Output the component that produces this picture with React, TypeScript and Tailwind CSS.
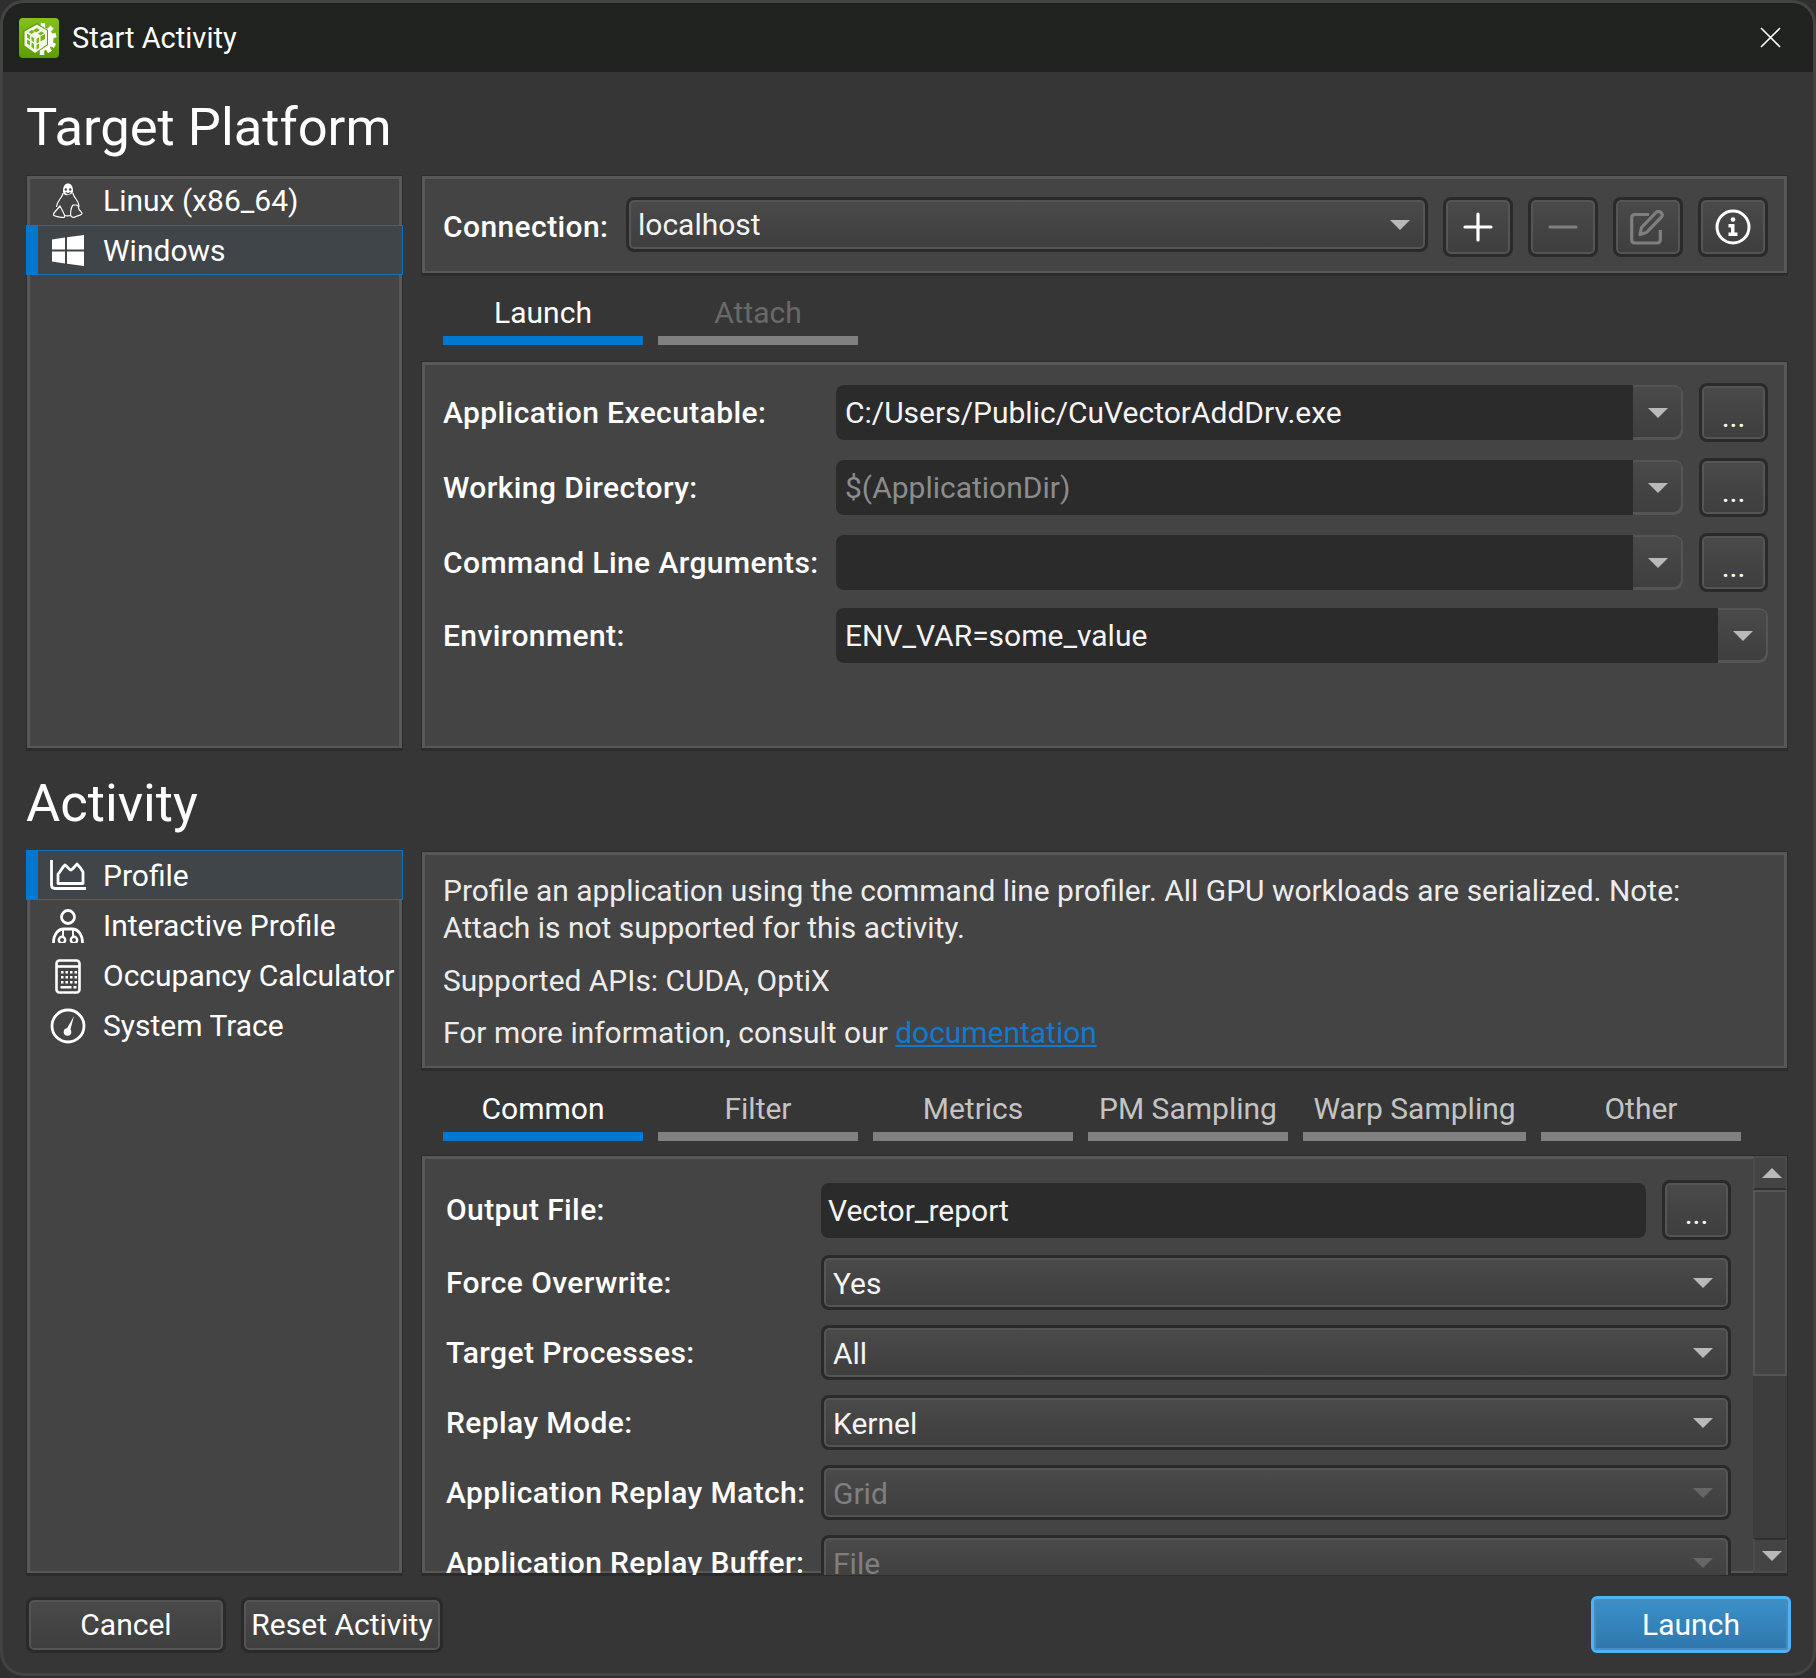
import React from "react";

const Caret = ({ dim = false, up = false }: { dim?: boolean; up?: boolean }) => (
  <svg width="20" height="10" viewBox="0 0 20 10" className="shrink-0">
    <polygon points={up ? "10,0 20,10 0,10" : "0,0 20,0 10,10"} fill={dim ? "#666666" : "#b9b9b9"} />
  </svg>
);

const Logo = () => (
  <svg width="40" height="40" viewBox="0 0 40 40" className="shrink-0">
    <defs>
      <linearGradient id="lg" x1="0" y1="0" x2="0" y2="1">
        <stop offset="0" stopColor="#84c21a" />
        <stop offset="1" stopColor="#5c9c00" />
      </linearGradient>
    </defs>
    <rect width="40" height="40" rx="4" fill="url(#lg)" />
    <circle cx="23" cy="21" r="11.500" fill="#ffffff" />
    <g stroke="#ffffff" strokeWidth="4.500">
      <path d="M23 21L24 5M23 21L33 9M23 21L37 17M23 21L36 28M23 21L31 34M23 21L23 37" />
    </g>
    <polygon points="4,13 18,5 29,12 29,27 16,36 4,28" fill="#5f9e08" />
    <polygon points="5.500,13.500 18,6.500 28,12.500 28,26.500 16,35 5.500,27.500" fill="#f4f8ea" />
    <g fill="#76b512">
      <polygon points="8,15.500 11,17.500 11,21.500 8,19.500" />
      <polygon points="12.500,18.500 15,20 15,24 12.500,22.500" />
      <polygon points="8,21.500 11,23.500 11,27.500 8,25.500" />
      <polygon points="12.500,24.500 15,26 15,31 12.500,29" />
      <polygon points="14,12.500 18,10 21,12 17,14.500" />
      <polygon points="9.500,14 13,12 15.500,14 12.500,16" />
      <polygon points="19,15.500 22.500,13.500 25,15 21.500,17.500" />
      <polygon points="17.500,21 20,19.500 20,24 17.500,25.500" />
      <polygon points="17.500,27 20,25.500 20,30 17.500,31.500" />
      <polygon points="21.500,18.500 26,16 26,21 21.500,23.500" />
    </g>
  </svg>
);

const Penguin = () => (
  <svg width="30" height="35" viewBox="0 0 30 35" fill="none" stroke="#fff" strokeWidth="1.200" className="shrink-0">
    <path d="M10 8c0-5 2-7.500 5-7.500s5 2.500 5 7.500c0 2-1 3-5 4s-5-2-5-4z" fill="#fff" stroke="none" />
    <circle cx="12.800" cy="6.500" r="1.200" fill="#444" stroke="none" />
    <circle cx="17.200" cy="6.500" r="1.200" fill="#444" stroke="none" />
    <path d="M12.500 9.500l2.500 1.300 2.500-1.300" stroke="#444" />
    <path d="M20 10c0 2 1 3.500 3 6s3 5 3 8" />
    <path d="M10 10c0 2-1 3.500-3 6s-3 5-3.500 8" />
    <path d="M7 23L1 30c-1 1-.5 2.500 1 3 3 1 7 1.500 9 1.500 1.500-1 .5-3-4-11.500z" />
    <path d="M23 22h-3c-2 2-3 9-2 11 1 1.500 3 1.500 5 .5 3-1 6-1.500 6-3 0-1-2-3-3-4l-1-4z" />
    <path d="M11 32.500c2 .5 5 .5 7 0" />
  </svg>
);

const WindowsIcon = () => (
  <svg width="32" height="31" viewBox="0 0 32 31" className="shrink-0">
    <path d="M0 4.500l13-2v12H0zM15 2.200L32 0v14.500H15zM0 16.500h13v12l-13-2zM15 16.500h17V31l-17-2.300z" fill="#fff" />
  </svg>
);

const ProfileIcon = () => (
  <svg width="36" height="30" viewBox="0 0 36 30" fill="none" stroke="#fff" strokeWidth="2.800" className="shrink-0">
    <path d="M1.500 0v25c0 2 1 3.500 3.500 3.500h31" />
    <path d="M8 23.500V14c2-1 4-7 7-9 2 1 4 5 6 5 2-1 4-4 6-6 2 2 5 6 6 8v11.500z" strokeLinejoin="round" />
  </svg>
);

const PersonIcon = () => (
  <svg width="32" height="34" viewBox="0 0 32 34" fill="none" stroke="#fff" strokeWidth="2.800" className="shrink-0">
    <circle cx="16" cy="8" r="6.500" />
    <path d="M1.500 34c0-9 5-14 10-14h9c5 0 10 5 10 14" />
    <circle cx="10" cy="31" r="3.200" strokeWidth="2.400" />
    <circle cx="22" cy="31" r="3.200" strokeWidth="2.400" />
    <path d="M11 20v7M21 20v7" strokeWidth="2" />
  </svg>
);

const CalcIcon = () => (
  <svg width="26" height="35" viewBox="0 0 26 35" fill="none" stroke="#fff" strokeWidth="2.600" className="shrink-0">
    <rect x="1.500" y="1.500" width="23" height="32" rx="3" />
    <path d="M1.500 7.500h23" />
    <g fill="#fff" stroke="none">
      {[6, 10.5, 15, 19.5].map((x) => [12, 17, 22].map((y) => <rect key={`${x}-${y}`} x={x} y={y} width="2.500" height="2.500" />))}
      <rect x="5.500" y="27" width="11" height="2.500" />
      <rect x="18.500" y="27" width="3" height="2.500" />
    </g>
  </svg>
);

const TraceIcon = () => (
  <svg width="36" height="36" viewBox="0 0 36 36" fill="none" stroke="#fff" strokeWidth="2.800" className="shrink-0">
    <circle cx="18" cy="18" r="16" />
    <path d="M24 8l-4 15h-4.500z" fill="#fff" stroke="none" />
    <circle cx="17.500" cy="24" r="3.800" fill="#fff" stroke="none" />
  </svg>
);

const PlusIcon = () => (
  <svg width="30" height="30" viewBox="0 0 30 30" stroke="#fff" strokeWidth="3.200" strokeLinecap="round">
    <path d="M15 2v26M2 15h26" />
  </svg>
);
const MinusIcon = () => (
  <svg width="30" height="30" viewBox="0 0 30 30" stroke="#7f7f7f" strokeWidth="3.200" strokeLinecap="round">
    <path d="M2 15h26" />
  </svg>
);
const EditIcon = () => (
  <svg width="36" height="36" viewBox="0 0 36 36" fill="none" stroke="#7f7f7f" strokeWidth="3.200">
    <path d="M19 5.500H5C3 5.500 1.700 7 1.700 9v21.500c0 2 1.300 3.500 3.300 3.500h22c2 0 3.300-1.500 3.300-3.500V21" />
    <path d="M10 25.500l1.500-7L26 3.500c1.500-1.500 3.500-1.500 5 0s1.500 3.500 0 5L16.500 23.500z" strokeLinejoin="round" />
  </svg>
);
const InfoIcon = () => (
  <svg width="36" height="36" viewBox="0 0 36 36" fill="none">
    <circle cx="18" cy="18" r="16" stroke="#fff" strokeWidth="3" />
    <circle cx="18" cy="10.500" r="2.300" fill="#fff" />
    <path d="M13.500 15h6v8.500h3V27h-9v-3.500h2.500v-5h-2.500z" fill="#fff" />
  </svg>
);
const CloseIcon = () => (
  <svg width="21" height="21" viewBox="0 0 21 21" stroke="#fff" strokeWidth="1.600" fill="none">
    <path d="M1 1l19 19M20 1L1 20" />
  </svg>
);

const Panel = ({ className = "", children }: { className?: string; children?: React.ReactNode }) => (
  <div className={`border-x border-t border-b-[3px] border-[#2c2c2c] bg-[#444444] shadow-[inset_3px_3px_0_#585858,inset_-3px_-2px_0_#585858] ${className}`}>{children}</div>
);

const Btn = ({ className = "", children }: { className?: string; children?: React.ReactNode }) => (
  <div className={`flex shrink-0 items-center justify-center rounded-[8px] border-[3px] border-[#2a2a2a] bg-linear-to-b from-[#4a4a4a] to-[#3e3e3e] text-white shadow-[inset_0_0_0_2px_#555555] ${className}`}>
    {children}
  </div>
);

const Dots = () => (
  <Btn className="h-[59px] w-[69px] items-end pb-[7px] text-[30px] leading-[30px]">...</Btn>
);

const Combo = ({ text, dim = false, className = "" }: { text?: string; dim?: boolean; className?: string }) => (
  <div className={`flex h-[55px] shrink-0 items-center overflow-hidden rounded-[8px] bg-[#2b2b2b] ${className}`}>
    <span className={`min-w-0 flex-1 pl-[9px] ${dim ? "text-[#8c8c8c]" : "text-[#f4f4f4]"}`}>{text}</span>
    <div className="flex h-full w-[50px] items-center justify-center rounded-r-[8px] bg-linear-to-b from-[#4a4a4a] to-[#3e3e3e] shadow-[inset_-2px_-3px_0_#555555,inset_0_2px_0_#555555]">
      <Caret />
    </div>
  </div>
);

const Select = ({ text, dim = false, className = "" }: { text?: string; dim?: boolean; className?: string }) => (
  <div className={`flex h-[55px] shrink-0 items-center justify-between rounded-[8px] border-[3px] border-[#2a2a2a] bg-linear-to-b from-[#4a4a4a] to-[#3e3e3e] pl-[9px] pr-[15px] shadow-[inset_0_0_0_2px_#555555] ${dim ? "text-[#7f7f7f]" : "text-[#f4f4f4]"} ${className}`}>
    <span className="pt-[2px]">{text}</span>
    <Caret dim={dim} />
  </div>
);

const Tab = ({ text, active = false, dim = false, w = "w-[200px]" }: { text: string; active?: boolean; dim?: boolean; w?: string }) => (
  <div className={`flex h-[48px] flex-col items-center justify-between ${w}`}>
    <span className={`text-[30px] leading-[31px] ${active ? "text-white" : dim ? "text-[#696969]" : "text-[#c4c4c4]"}`}>{text}</span>
    <div className={`h-[9px] w-full ${active ? "bg-[#0078d0]" : "bg-[#808080]"}`} />
  </div>
);

const Item = ({ icon, text, active = false, tall = false, nudge = false }: { icon: React.ReactNode; text: string; active?: boolean; tall?: boolean; nudge?: boolean }) => (
  <div className={`relative flex h-[50px] items-center ${active ? "-mx-px border border-[#0b73c0] bg-[#40454a] pl-[12px]" : "pl-[12px]"} ${tall ? "mb-px" : ""}`}>
    {active && <div className="absolute -bottom-px -left-px -top-px w-[12px] bg-[#0078d0]" />}
    <div className="flex w-[64px] shrink-0 items-center justify-center pr-[6px]">{icon}</div>
    <span className={`whitespace-nowrap text-white ${nudge ? "pt-[2px]" : ""}`}>{text}</span>
  </div>
);

const Label = ({ children, className = "" }: { children: React.ReactNode; className?: string }) => (
  <div className={`shrink-0 whitespace-nowrap font-medium tracking-[0.4px] text-white ${className}`}>{children}</div>
);

export default function App() {
  return (
    <div className="h-[1678px] w-[1816px] overflow-hidden bg-[#2f2f2f] font-['Roboto',sans-serif] text-[30px] leading-[36px] text-[#f4f4f4]">
      <div className="flex h-[1676px] w-[1816px] flex-col overflow-hidden rounded-[24px] border-[3px] border-[#434343] bg-[#363636]">
        <div className="flex h-[69px] shrink-0 items-center justify-between bg-[#1f221e] pl-[16px] pr-[32px]">
          <div className="flex items-center gap-[13px]">
            <Logo />
            <span className="text-[29px] text-white">Start Activity</span>
          </div>
          <CloseIcon />
        </div>

        <div className="flex min-h-0 flex-1 flex-col px-[23px]">
          <h1 className="flex h-[103px] shrink-0 items-center pt-[6px] text-[52.5px] text-white">Target Platform</h1>
          <div className="grid h-[576px] shrink-0 grid-cols-[377px_1367px] gap-[18px]">
            <Panel>
              <div className="-mt-px">
                <Item icon={<Penguin />} text="Linux (x86_64)" nudge />
                <Item icon={<WindowsIcon />} text="Windows" active nudge />
              </div>
            </Panel>
            <div className="flex min-h-0 flex-col">
              <Panel className="flex h-[101px] shrink-0 items-center px-[21px] pt-[5px]">
                <Label className="w-[183px]">Connection:</Label>
                <div className="-mt-[5px] flex h-[55px] w-[802px] shrink-0 items-center justify-between rounded-[8px] border-[3px] border-[#2a2a2a] bg-linear-to-b from-[#4a4a4a] to-[#3e3e3e] pl-[9px] pr-[15px] shadow-[inset_0_0_0_2px_#555555]">
                  <span>localhost</span>
                  <Caret />
                </div>
                <Btn className="ml-[15px] h-[60px] w-[70px]"><PlusIcon /></Btn>
                <Btn className="ml-[15px] h-[60px] w-[70px]"><MinusIcon /></Btn>
                <Btn className="ml-[15px] h-[60px] w-[70px]"><EditIcon /></Btn>
                <Btn className="ml-[15px] h-[60px] w-[70px]"><InfoIcon /></Btn>
              </Panel>
              <div className="flex h-[85px] shrink-0 items-end gap-[15px] pb-[16px] pl-[22px]">
                <Tab text="Launch" active />
                <Tab text="Attach" dim />
              </div>
              <Panel className="flex min-h-0 flex-1 flex-col gap-[16px] px-[21px] pt-[21px]">
                {[
                  { l: "Application Executable:", t: "C:/Users/Public/CuVectorAddDrv.exe", d: false },
                  { l: "Working Directory:", t: "$(ApplicationDir)", d: true },
                  { l: "Command Line Arguments:", t: "", d: false },
                ].map((r) => (
                  <div key={r.l} className="flex h-[59px] items-center">
                    <Label className="w-[393px]">{r.l}</Label>
                    <Combo text={r.t} dim={r.d} className="w-[847px]" />
                    <div className="ml-[16px] shrink-0"><Dots /></div>
                  </div>
                ))}
                <div className="flex h-[55px] items-center">
                  <Label className="w-[393px]">Environment:</Label>
                  <Combo text="ENV_VAR=some_value" className="w-[932px]" />
                </div>
              </Panel>
            </div>
          </div>

          <h2 className="flex h-[100px] shrink-0 items-center pt-[4px] text-[52.5px] text-white">Activity</h2>
          <div className="grid h-[725px] shrink-0 grid-cols-[377px_1367px] gap-[18px]">
            <Panel>
              <div className="-mt-[2px]">
                <Item icon={<ProfileIcon />} text="Profile" active tall nudge />
                <Item icon={<PersonIcon />} text="Interactive Profile" />
                <Item icon={<CalcIcon />} text="Occupancy Calculator" />
                <Item icon={<TraceIcon />} text="System Trace" />
              </div>
            </Panel>
            <div className="flex min-h-0 flex-col">
              <Panel className="flex h-[220px] shrink-0 flex-col px-[21px] pt-[20px] text-[29.95px] text-[#ececec]">
                <p className="leading-[37px]">Profile an application using the command line profiler. All GPU workloads are serialized. Note:<br />Attach is not supported for this activity.</p>
                <p className="mt-[17px] leading-[36px]">Supported APIs: CUDA, OptiX</p>
                <p className="mt-[16px] leading-[36px]">For more information, consult our <span className="text-[#0f7ad0] underline">documentation</span></p>
              </Panel>
              <div className="flex h-[84px] shrink-0 items-end gap-[15px] pb-[14px] pl-[22px]">
                <Tab text="Common" active />
                <Tab text="Filter" />
                <Tab text="Metrics" />
                <Tab text="PM Sampling" />
                <Tab text="Warp Sampling" w="w-[223px]" />
                <Tab text="Other" />
              </div>
              <Panel className="flex min-h-0 flex-1">
                <div className="-mb-[2px] min-h-0 flex-1 overflow-hidden pl-[24px] pr-[20px] pt-[24px]">
                  <div className="flex h-[60px] items-center">
                    <Label className="w-[375px]">Output File:</Label>
                    <div className="flex h-[55px] w-[825px] items-center rounded-[8px] bg-[#2b2b2b] pl-[7px] pt-[2px]">Vector_report</div>
                    <div className="ml-[16px]"><Btn className="h-[60px] w-[69px] items-end pb-[8px] text-[30px] leading-[30px]">...</Btn></div>
                  </div>
                  {[
                    { l: "Force Overwrite:", t: "Yes", d: false },
                    { l: "Target Processes:", t: "All", d: false },
                    { l: "Replay Mode:", t: "Kernel", d: false },
                    { l: "Application Replay Match:", t: "Grid", d: true },
                    { l: "Application Replay Buffer:", t: "File", d: true },
                  ].map((r) => (
                    <div key={r.l} className="mt-[15px] flex h-[55px] items-center">
                      <Label className="w-[375px]">{r.l}</Label>
                      <Select text={r.t} dim={r.d} className="w-[910px]" />
                    </div>
                  ))}
                </div>
                <div className="flex w-[34px] shrink-0 flex-col bg-[#3c3c3c]">
                  <div className="flex h-[34px] shrink-0 items-center justify-center border-2 border-[#4c4c4c] border-b-[#2f2f2f] bg-[#444444] pl-[4px]"><Caret up /></div>
                  <div className="h-[186px] shrink-0 border-2 border-[#555555] bg-[#444444]" />
                  <div className="min-h-0 flex-1" />
                  <div className="flex h-[35px] shrink-0 items-center justify-center border-2 border-[#4c4c4c] border-t-[#2f2f2f] bg-[#444444] pl-[4px]"><Caret /></div>
                </div>
              </Panel>
            </div>
          </div>

          <div className="-mr-px flex flex-1 items-center justify-between">
            <div className="flex gap-[15px]">
              <Btn className="h-[56px] w-[200px]">Cancel</Btn>
              <Btn className="h-[56px] w-[202px]">Reset Activity</Btn>
            </div>
            <div className="flex h-[57px] w-[200px] items-center justify-center rounded-[6px] border-[3px] border-[#4db2f6] bg-linear-to-b from-[#3b90c9] to-[#2e77ad] text-white shadow-[inset_0_0_0_2px_#4a8bb8]">Launch</div>
          </div>
        </div>
      </div>
    </div>
  );
}
